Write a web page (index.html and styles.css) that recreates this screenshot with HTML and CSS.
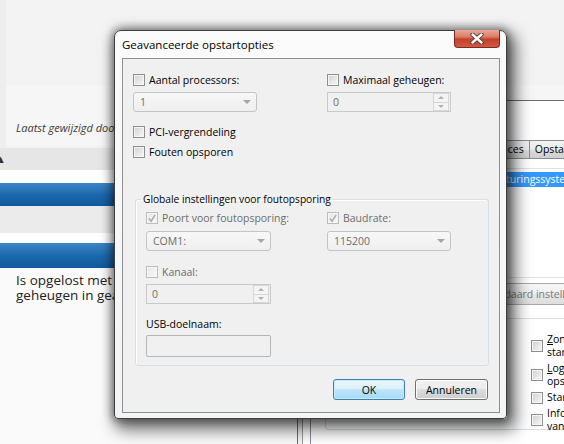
FILE: index.html
```html
<!DOCTYPE html>
<html lang="nl">
<head>
<meta charset="utf-8">
<title>Geavanceerde opstartopties</title>
<link rel="stylesheet" href="styles.css">
</head>
<body>
<div class="page">
  <div class="page-top">
    <div class="meta-box"><p class="meta">Laatst gewijzigd door: gebruiker op 12-03-2011</p></div>
  </div>
  <div class="band band-gray"><span class="caret">▲</span></div>
  <div class="gap gap-a"></div>
  <div class="band band-blue band-blue-a"></div>
  <div class="band band-gray band-gray-b"></div>
  <div class="gap gap-b"></div>
  <div class="band band-blue band-blue-b"></div>
  <div class="answer"><p>Is opgelost met het uitschakelen van maximaal<br>geheugen in geavanceerde opstartopties.</p></div>
</div>

<div class="msc">
  <div class="msc-caption"></div>
  <div class="msc-client">
    <div class="tabs">
      <span class="tab tab-1">Algemeen</span><span class="tab tab-2 tab-sel">Opstarten</span><span class="tab">Services</span><span class="tab">Opstarten</span><span class="tab">Hulpprogramma's</span>
    </div>
    <div class="tabpage">
      <div class="listbox"><div class="list-item">Windows 7 (C:\Windows) : Huidig besturingssysteem; standaardbesturingssysteem</div></div>
      <div class="msc-buttons"><span class="wbtn">Geavanceerde opties...</span><span class="wbtn wbtn-default">Als standaard instellen</span><span class="wbtn">Verwijderen</span></div>
      <fieldset class="bootopts">
        <legend>Opstartopties</legend>
        <div class="boot-left">
          <div class="radio-row"><span class="radio"></span><span>Minimaal</span></div>
          <div class="radio-row"><span class="radio"></span><span>Alternatieve shell</span></div>
          <div class="radio-row"><span class="radio"></span><span>Active Directory herstellen</span></div>
          <div class="radio-row"><span class="radio"></span><span><u>N</u>etwerk</span></div>
        </div>
        <div class="boot-right">
          <div class="wcheck"><span class="cb"></span><span class="wlabel"><u>Z</u>onder GUI<br>starten</span></div>
          <div class="wcheck"><span class="cb"></span><span class="wlabel"><u>L</u>ogboek voor<br>opstarten</span></div>
          <div class="wcheck"><span class="cb"></span><span class="wlabel">Standaardvideo</span></div>
          <div class="wcheck"><span class="cb"></span><span class="wlabel">Informatie<br>van besturingssysteem</span></div>
        </div>
      </fieldset>
    </div>
  </div>
</div>

<div class="dialog">
  <div class="titlebar">
    <span class="title">Geavanceerde opstartopties</span>
    <span class="close"><svg width="14" height="11" viewBox="0 0 14 11"><path d="M2.5 1.5 L11.5 9.5 M11.5 1.5 L2.5 9.5" stroke="#3a3a3a" stroke-width="4.2" stroke-linecap="round"/><path d="M2.5 1.5 L11.5 9.5 M11.5 1.5 L2.5 9.5" stroke="#ffffff" stroke-width="2.4" stroke-linecap="round"/></svg></span>
  </div>
  <div class="client">
    <div class="pair">
      <div class="col">
        <label class="check"><span class="cb"></span><span>Aantal processors:</span></label>
        <div class="combo"><span>1</span><span class="arrow"></span></div>
      </div>
      <div class="col">
        <label class="check"><span class="cb"></span><span>Maximaal geheugen:</span></label>
        <div class="spin"><span>0</span><span class="spin-btns"><span class="sb sb-up"></span><span class="sb sb-down"></span></span></div>
      </div>
    </div>
    <label class="check check-pci"><span class="cb"></span><span>PCI-vergrendeling</span></label>
    <label class="check check-debug"><span class="cb"></span><span>Fouten opsporen</span></label>

    <fieldset class="group">
      <legend>Globale instellingen voor foutopsporing</legend>
      <div class="group-body">
        <div class="pair pair-g">
          <div class="col">
            <label class="check dis"><span class="cb cb-dis cb-on"><svg width="11" height="11" viewBox="0 0 11 11"><path d="M2 5.5 L4.5 8.5 L9 1.5" fill="none" stroke="#a9a9a9" stroke-width="1.6"/></svg></span><span>Poort voor foutopsporing:</span></label>
            <div class="combo combo-w"><span>COM1:</span><span class="arrow"></span></div>
          </div>
          <div class="col">
            <label class="check dis"><span class="cb cb-dis cb-on"><svg width="11" height="11" viewBox="0 0 11 11"><path d="M2 5.5 L4.5 8.5 L9 1.5" fill="none" stroke="#a9a9a9" stroke-width="1.6"/></svg></span><span>Baudrate:</span></label>
            <div class="combo"><span>115200</span><span class="arrow"></span></div>
          </div>
        </div>
        <label class="check dis check-kanaal"><span class="cb cb-dis"></span><span>Kanaal:</span></label>
        <div class="spin spin-w"><span>0</span><span class="spin-btns"><span class="sb sb-up"></span><span class="sb sb-down"></span></span></div>
        <div class="usb-label">USB-doelnaam:</div>
        <div class="textbox"></div>
      </div>
    </fieldset>

    <div class="buttons">
      <span class="btn btn-ok">OK</span>
      <span class="btn">Annuleren</span>
    </div>
  </div>
</div>
</body>
</html>
```
FILE: styles.css
```css
html, body {
  margin: 0;
  padding: 0;
}
body {
  width: 564px;
  height: 444px;
  overflow: hidden;
  position: relative;
  background: #f3f3f3;
  font-family: "Open Sans", "Noto Sans", sans-serif;
}

/* ---------- background web page ---------- */
.page {
  width: 564px;
  display: flex;
  flex-direction: column;
}
.page-top {
  height: 148px;
  background: #f3f3f3;
  display: flex;
  flex-direction: column;
  justify-content: flex-end;
  padding-left: 6px;
  box-shadow: inset 6px 0 0 #eceef0;
}
.meta-box {
  height: 60px;
  background: #f6f6f6;
  margin-bottom: 3px;
  display: flex;
  align-items: flex-end;
  padding: 0 0 10px 10px;
  box-sizing: border-box;
}
.meta {
  margin: 0;
  font-style: italic;
  font-size: 11px;
  line-height: 15px;
  color: #3c3c3c;
  white-space: nowrap;
}
.band { width: 100%; }
.band-gray {
  height: 22px;
  background: #e6e6e6;
  position: relative;
  overflow: hidden;
}
.caret {
  position: absolute;
  left: -5px;
  top: 3px;
  font-size: 11px;
  color: #333;
}
.band-gray-b { height: 27px; background: #ebebeb; }
.gap { background: #ffffff; }
.gap-a { height: 13px; }
.gap-b { height: 10px; }
.band-blue {
  background: linear-gradient(#3a86c6, #1a67ab 55%, #0f5a9c);
}
.band-blue-a { height: 23px; }
.band-blue-b { height: 25px; }
.answer {
  background: #fafafa;
  height: 200px;
  padding: 5px 0 0 16px;
}
.answer p {
  margin: 0;
  font-size: 13.5px;
  line-height: 15px;
  color: #222;
  white-space: nowrap;
}

/* ---------- System configuration window (behind) ---------- */
.msc {
  position: absolute;
  left: 297px;
  top: 100px;
  width: 330px;
  height: 360px;
  border: 1px solid #6b6b6b;
  background: #f2f4f6;
  box-sizing: border-box;
  display: flex;
  flex-direction: column;
}
.msc-caption {
  height: 29px;
  background: #ffffff;
}
.msc-client {
  flex: 1;
  margin-left: 4px;
  border-left: 1px solid #9a9a9a;
  background: #ffffff;
  padding: 10px 0 0 7px;
  display: flex;
  flex-direction: column;
  font-size: 10.5px;
  color: #000;
}
.tabs {
  display: flex;
  align-items: flex-end;
  height: 18px;
  padding-left: 2px;
}
.tab {
  flex: none;
  height: 17px;
  line-height: 17px;
  padding: 0 5px;
  border: 1px solid #898c95;
  border-bottom: none;
  margin-right: -1px;
  background: linear-gradient(#f2f2f2, #ebebeb 50%, #dddddd 50%, #cfcfcf);
  white-space: nowrap;
}
.tab-1 { width: 70px; }
.tab-2 { width: 74px; }
.tab-sel { background: #ffffff; height: 19px; }
.tabpage {
  flex: 1;
  border-top: 1px solid #898c95;
  border-left: 1px solid #898c95;
  background: #ffffff;
  padding-left: 14px;
  display: flex;
  flex-direction: column;
}
.listbox {
  margin-top: 9px;
  margin-left: -8px;
  height: 110px;
  box-sizing: border-box;
  border: 1px solid #e2e2e2;
  padding: 3px 2px;
}
.list-item {
  background: #3399ff;
  color: #fff;
  height: 15px;
  line-height: 15px;
  padding-left: 6px;
  white-space: nowrap;
}
.msc-buttons {
  margin-top: 5px;
  margin-left: -3px;
  display: flex;
  gap: 6px;
}
.wbtn {
  flex: none;
  height: 20px;
  line-height: 20px;
  padding: 0 8px;
  border: 1px solid #a9a9a9;
  border-radius: 3px;
  background: linear-gradient(#f6f6f6, #efefef 50%, #e5e5e5 50%, #dedede);
  color: #7a7a7a;
  white-space: nowrap;
}
.bootopts {
  margin: 6px 0 0 0;
  padding: 0;
  border: 1px solid #d5dfe5;
  border-radius: 3px;
  height: 119px;
  box-sizing: border-box;
  display: flex;
}
.bootopts legend {
  margin-left: 6px;
  padding: 0 2px;
  line-height: 14px;
}
.boot-left {
  flex: none;
  width: 205px;
  padding: 6px 0 0 30px;
  box-sizing: border-box;
  display: flex;
  flex-direction: column;
  gap: 8px;
  color: #6d6d6d;
}
.radio-row {
  display: flex;
  align-items: center;
  gap: 4px;
  height: 14px;
  white-space: nowrap;
}
.radio {
  width: 11px;
  height: 11px;
  border-radius: 50%;
  border: 1px solid #b9b9b9;
  background: #f0f0f0;
  box-sizing: border-box;
}
.boot-right {
  display: flex;
  flex-direction: column;
  padding-top: 8px;
  gap: 3px;
}
.wcheck {
  display: flex;
  align-items: center;
  gap: 4px;
  line-height: 13px;
}
.wlabel { white-space: nowrap; }

/* ---------- dialog ---------- */
.dialog {
  position: absolute;
  left: 114px;
  top: 30px;
  width: 393px;
  height: 389px;
  box-sizing: border-box;
  border: 1px solid #3d3d3d;
  border-radius: 7px 7px 4px 4px;
  background: linear-gradient(#fbfbfb, #f3f4f5);
  box-shadow: 5px 7px 16px 4px rgba(0, 0, 0, 0.55), 0 0 8px 2px rgba(0, 0, 0, 0.4);
  display: flex;
  flex-direction: column;
  font-size: 10.5px;
  color: #000;
}
.titlebar {
  height: 27px;
  display: flex;
  align-items: flex-start;
  justify-content: space-between;
  padding-left: 7px;
  padding-right: 6px;
}
.title {
  font-size: 11.5px;
  line-height: 14px;
  margin-top: 7px;
  white-space: nowrap;
}
.close {
  width: 46px;
  height: 18px;
  margin-top: -1px;
  box-sizing: border-box;
  border: 1px solid #7d2b1f;
  border-top: none;
  border-radius: 0 0 4px 4px;
  background: linear-gradient(#e9a996, #db7c66 40%, #c4402b 55%, #d25a42);
  display: flex;
  align-items: center;
  justify-content: center;
}
.client {
  flex: 1;
  margin: 0 6px 5px 7px;
  border: 1px solid #8e8f8f;
  background: #f0f0f0;
  display: flex;
  flex-direction: column;
  padding: 0 0 12px 10px;
}
.pair {
  display: grid;
  grid-template-columns: 194px 124px;
  margin-top: 13px;
}
.col {
  display: flex;
  flex-direction: column;
  gap: 4px;
}
.check {
  display: flex;
  align-items: center;
  gap: 4px;
  height: 16px;
  white-space: nowrap;
}
.check.dis { color: #6d6d6d; }
.cb {
  width: 12px;
  height: 12px;
  box-sizing: border-box;
  border: 1px solid #8e8f8f;
  background: linear-gradient(135deg, #d0d0d0, #f8f8f8);
  box-shadow: inset 0 0 0 1px #f6f6f6;
  flex: none;
  display: flex;
  align-items: center;
  justify-content: center;
}
.cb-dis {
  border-color: #bcbcbc;
  background: linear-gradient(135deg, #e6e6e6, #f9f9f9);
}
.cb svg { display: block; }
.combo {
  width: 124px;
  height: 20px;
  box-sizing: border-box;
  border: 1px solid #c4c4c4;
  border-radius: 3px;
  background: linear-gradient(#f7f7f7, #efefef);
  display: flex;
  align-items: center;
  justify-content: space-between;
  padding: 0 5px 0 6px;
  color: #6d6d6d;
}
.combo-w { width: 125px; }
.arrow {
  width: 0;
  height: 0;
  border-left: 4px solid transparent;
  border-right: 4px solid transparent;
  border-top: 4px solid #a6a6a6;
}
.spin {
  width: 124px;
  height: 20px;
  box-sizing: border-box;
  border: 1px solid #c9c9c9;
  background: #f0f0f0;
  display: flex;
  align-items: center;
  justify-content: space-between;
  padding-left: 5px;
  color: #6d6d6d;
}
.spin-w { width: 125px; margin-top: 4px; }
.spin-btns {
  width: 16px;
  height: 18px;
  display: flex;
  flex-direction: column;
  margin-right: 1px;
}
.sb {
  flex: 1;
  border: 1px solid #d6d6d6;
  background: #f4f4f4;
  display: flex;
  align-items: center;
  justify-content: center;
}
.sb-down { border-top: none; }
.sb::after {
  content: "";
  width: 0;
  height: 0;
  border-left: 3px solid transparent;
  border-right: 3px solid transparent;
}
.sb-up::after { border-bottom: 3px solid #b0b0b0; }
.sb-down::after { border-top: 3px solid #b0b0b0; }
.check-pci { margin-top: 12px; }
.check-debug { margin-top: 4px; }

.group {
  margin: 31px 10px 0 2px;
  padding: 0 0 8px 0;
  border: 1px solid #d5dfe5;
  border-radius: 3px;
  box-shadow: inset 1px 1px 0 #ffffff;
}
.group legend {
  margin-left: 5px;
  padding: 0 2px;
  line-height: 16px;
  font-size: 10.2px;
}
.group-body {
  padding-left: 10px;
  display: flex;
  flex-direction: column;
}
.pair-g {
  margin-top: 3px;
  grid-template-columns: 181px 124px;
}
.pair-g .col { gap: 5px; }
.check-kanaal { margin-top: 13px; }
.usb-label {
  margin-top: 12px;
  height: 16px;
  line-height: 16px;
}
.textbox {
  margin-top: 3px;
  width: 125px;
  height: 22px;
  box-sizing: border-box;
  border: 1px solid #b5b5b5;
  border-radius: 2px;
  background: #f0f0f0;
}
.buttons {
  margin-top: 13px;
  display: flex;
  justify-content: flex-end;
  gap: 10px;
  padding-right: 11px;
}
.btn {
  height: 21px;
  box-sizing: border-box;
  border: 1px solid #707070;
  border-radius: 3px;
  background: linear-gradient(#f2f2f2, #ebebeb 50%, #dddddd 50%, #cfcfcf);
  box-shadow: inset 0 0 0 1px #fbfbfb;
  display: flex;
  align-items: center;
  justify-content: center;
  width: 73px;
  font-size: 10.5px;
}
.btn-ok {
  width: 72px;
  border-color: #3c7fb1;
  background: linear-gradient(#eaf6fd, #d9f0fc 50%, #bee6fd 50%, #a7d9f5);
  box-shadow: inset 0 0 0 1px #c8ecfb;
}
```
